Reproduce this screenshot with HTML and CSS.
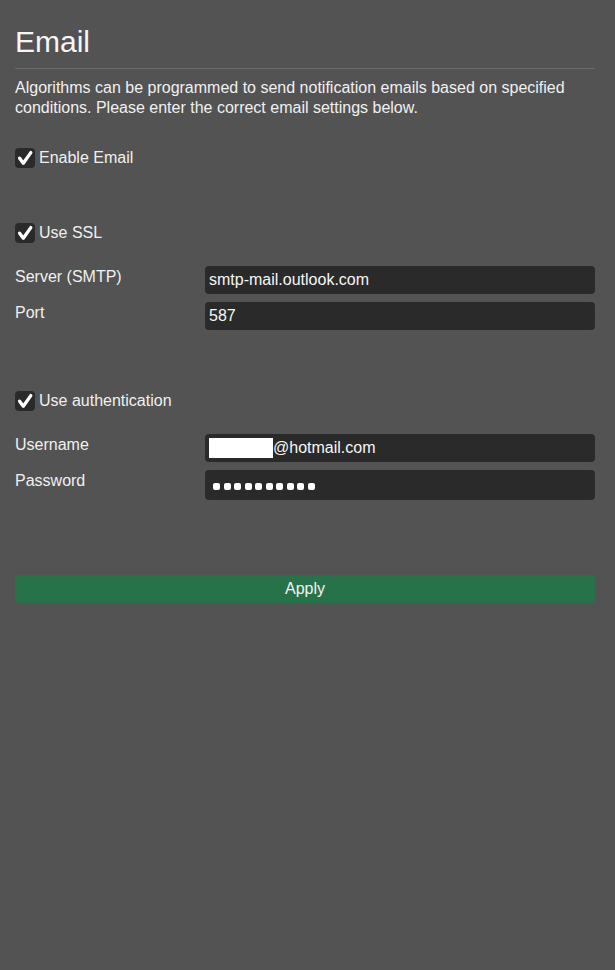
FILE: index.html
```html
<!DOCTYPE html>
<html lang="en">
<head>
<meta charset="utf-8">
<title>Email</title>
<link rel="stylesheet" href="styles.css">
</head>
<body>
<main class="page">
  <h1 class="title">Email</h1>
  <div class="rule"></div>
  <p class="intro">Algorithms can be programmed to send notification emails based on specified conditions. Please enter the correct email settings below.</p>

  <label class="check-row row-enable">
    <span class="box"><svg viewBox="0 0 20 20" width="20" height="20"><path d="M4.6 10.2 L8.3 15.2 L15.8 4.6" /></svg></span>
    <span class="check-text">Enable Email</span>
  </label>

  <label class="check-row row-ssl">
    <span class="box"><svg viewBox="0 0 20 20" width="20" height="20"><path d="M4.6 10.2 L8.3 15.2 L15.8 4.6" /></svg></span>
    <span class="check-text">Use SSL</span>
  </label>

  <div class="form-row row-server">
    <span class="label">Server (SMTP)</span>
    <div class="field">smtp-mail.outlook.com</div>
  </div>
  <div class="form-row row-next">
    <span class="label">Port</span>
    <div class="field">587</div>
  </div>

  <label class="check-row row-auth">
    <span class="box"><svg viewBox="0 0 20 20" width="20" height="20"><path d="M4.6 10.2 L8.3 15.2 L15.8 4.6" /></svg></span>
    <span class="check-text">Use authentication</span>
  </label>

  <div class="form-row row-user">
    <span class="label">Username</span>
    <div class="field"><span class="redact"></span>@hotmail.com</div>
  </div>
  <div class="form-row row-next">
    <span class="label">Password</span>
    <div class="field dots">
      <span class="dot"></span><span class="dot"></span><span class="dot"></span><span class="dot"></span><span class="dot"></span>
      <span class="dot"></span><span class="dot"></span><span class="dot"></span><span class="dot"></span><span class="dot"></span>
    </div>
  </div>

  <button class="apply" type="button">Apply</button>
</main>
</body>
</html>
```

FILE: styles.css
```css
html, body {
  margin: 0;
  padding: 0;
}

body {
  background: #535353;
  color: #f0f0f0;
  font-family: "Liberation Sans", Arial, sans-serif;
  font-size: 16px;
  width: 615px;
  height: 970px;
}

.page {
  padding: 0 20px 0 15px;
  display: flex;
  flex-direction: column;
}

.title {
  margin: 24px 0 0;
  font-size: 30px;
  line-height: 36px;
  font-weight: normal;
  color: #f6f6f6;
}

.rule {
  margin-top: 8px;
  height: 1px;
  background: #6a6a6a;
}

.intro {
  margin: 9px 0 0;
  line-height: 20px;
  color: #f0f0f0;
}

.check-row {
  display: flex;
  align-items: center;
  height: 20px;
  gap: 4px;
}

.row-enable { margin-top: 30px; }
.row-ssl { margin-top: 55px; }
.row-auth { margin-top: 61px; }

.box {
  width: 20px;
  height: 20px;
  border-radius: 4px;
  background: #2a2a2a;
  display: flex;
}

.box svg path {
  fill: none;
  stroke: #ffffff;
  stroke-width: 3.3;
  stroke-linecap: round;
  stroke-linejoin: round;
}

.check-text {
  line-height: 20px;
  color: #f0f0f0;
}

.form-row {
  display: grid;
  grid-template-columns: 190px 1fr;
  align-items: start;
}

.row-server { margin-top: 23px; }
.row-user { margin-top: 23px; }
.row-next { margin-top: 8px; }

.label {
  line-height: 20px;
  padding-top: 1px;
  color: #f0f0f0;
}

.field {
  height: 28px;
  border-radius: 4px;
  background: #2a2a2a;
  padding: 0 4px;
  display: flex;
  align-items: center;
  color: #f6f6f6;
  font-size: 16px;
}

.redact {
  width: 64px;
  height: 20px;
  background: #ffffff;
}

.dots {
  gap: 3.5px;
  padding-left: 8px;
  padding-top: 2px;
}

.dot {
  width: 7px;
  height: 7px;
  border-radius: 2px;
  background: #ffffff;
}

.apply {
  margin-top: 75px;
  height: 28px;
  border: none;
  border-radius: 4px;
  background: #28724a;
  color: #f2f2f2;
  font-family: "Liberation Sans", Arial, sans-serif;
  font-size: 16px;
  padding: 0;
}
```
